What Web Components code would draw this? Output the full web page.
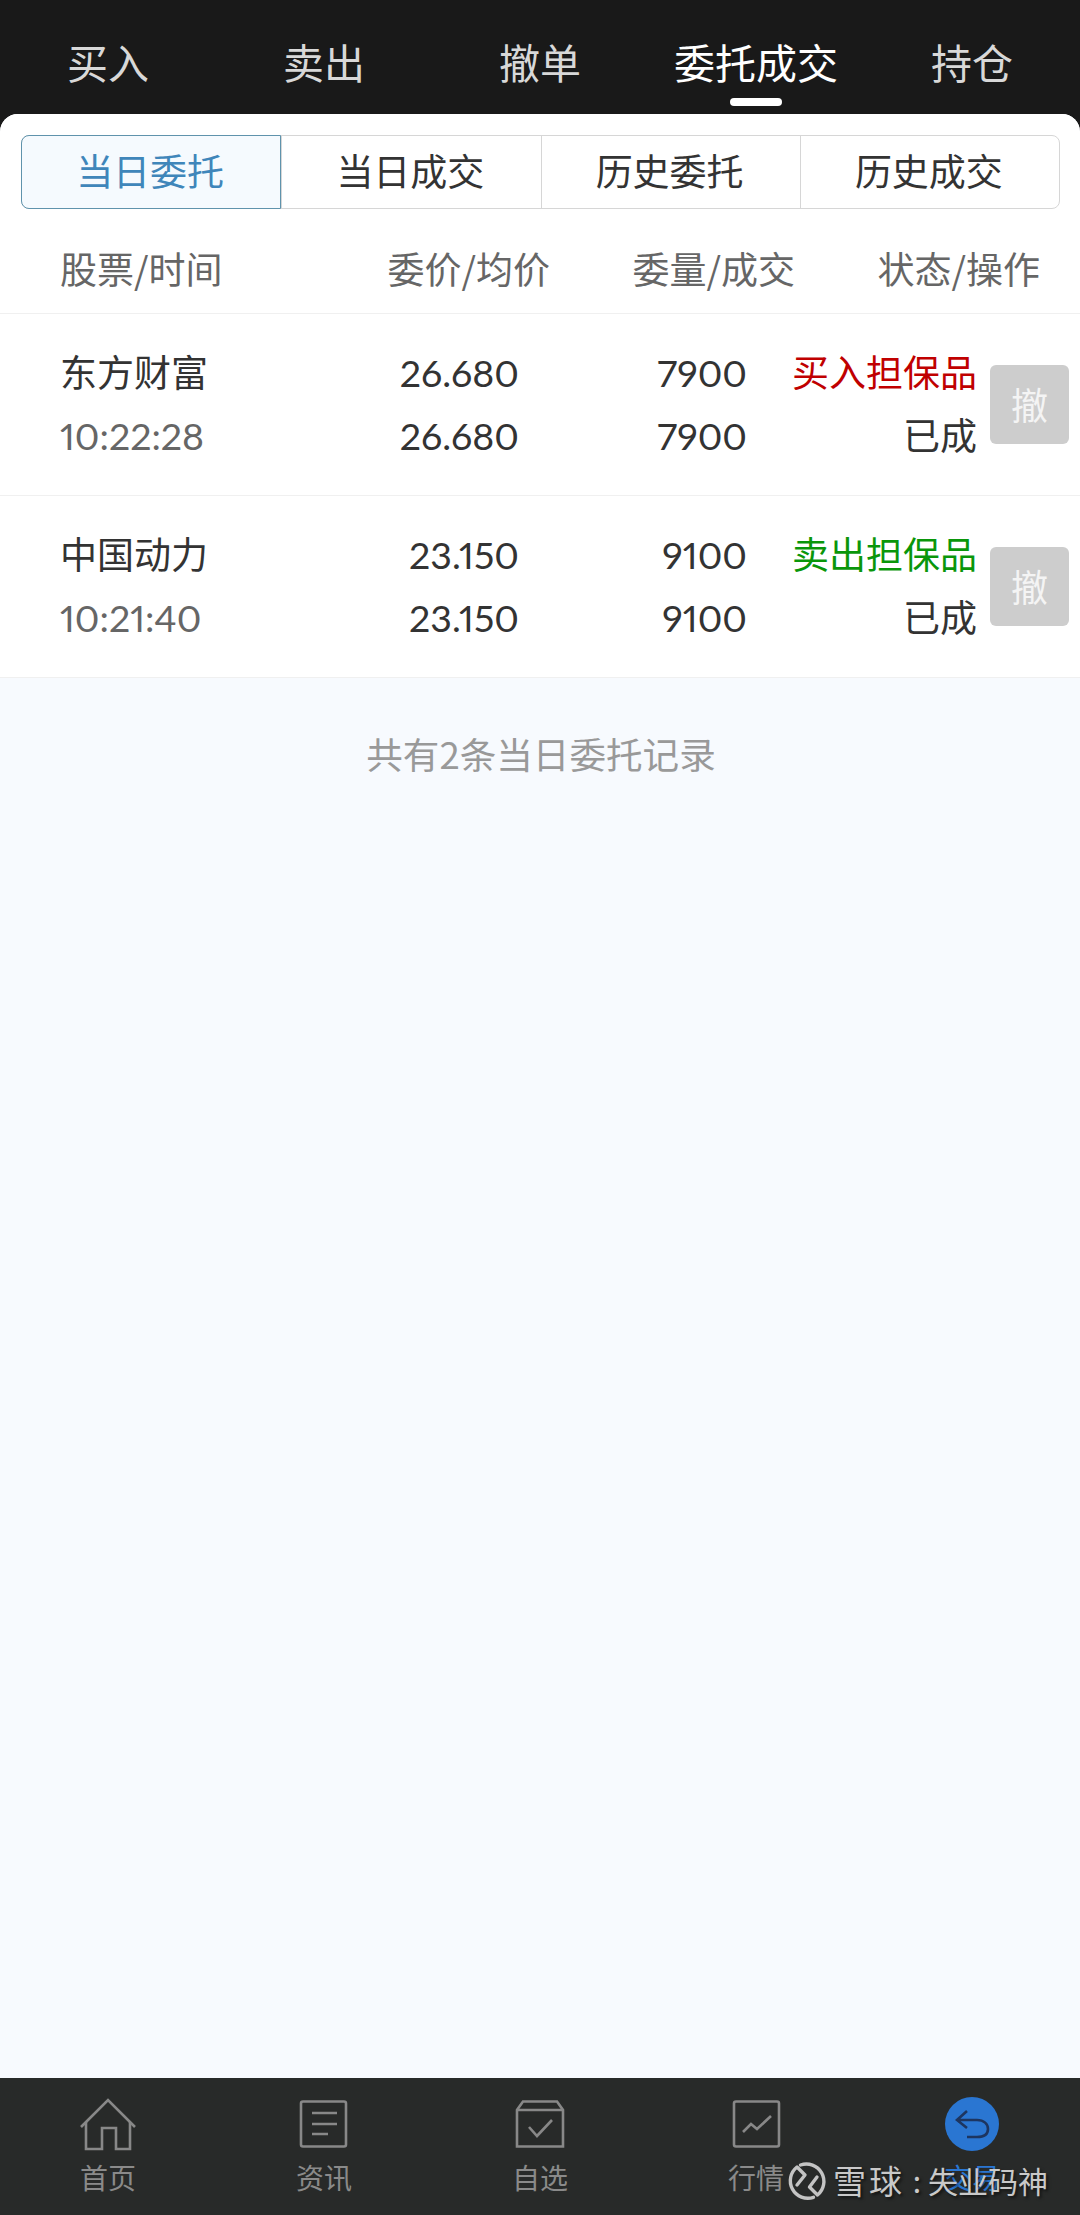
<!DOCTYPE html>
<html lang="zh">
<head>
<meta charset="utf-8">
<title>委托成交</title>
<style>
	html, body { margin: 0; padding: 0; }
	body {
		width: 1080px;
		height: 2215px;
		overflow: hidden;
		background: #191919;
		font-family: "Noto Sans CJK SC", sans-serif;
	}
</style>
</head>
<body>
<trade-page>
	<top-tabs slot="top">
		<top-tab>买入</top-tab>
		<top-tab>卖出</top-tab>
		<top-tab>撤单</top-tab>
		<top-tab active>委托成交</top-tab>
		<top-tab>持仓</top-tab>
	</top-tabs>

	<seg-bar>
		<seg-item active>当日委托</seg-item>
		<seg-item>当日成交</seg-item>
		<seg-item>历史委托</seg-item>
		<seg-item>历史成交</seg-item>
	</seg-bar>

	<order-head></order-head>

	<order-row side="buy">
		<span slot="name">东方财富</span>
		<span slot="time">10:22:28</span>
		<span slot="price">26.680</span>
		<span slot="avg">26.680</span>
		<span slot="qty">7900</span>
		<span slot="done">7900</span>
		<span slot="side">买入担保品</span>
		<span slot="status">已成</span>
	</order-row>
	<order-row side="sell">
		<span slot="name">中国动力</span>
		<span slot="time">10:21:40</span>
		<span slot="price">23.150</span>
		<span slot="avg">23.150</span>
		<span slot="qty">9100</span>
		<span slot="done">9100</span>
		<span slot="side">卖出担保品</span>
		<span slot="status">已成</span>
	</order-row>

	<list-note>共有2条当日委托记录</list-note>

	<bottom-nav slot="bottom">
		<nav-item>
			<svg slot="icon" width="56" height="56" viewBox="0 0 56 56" fill="none" stroke="#888" stroke-width="2.6">
				<path d="M1 29 L28 2 L55 29"/>
				<path d="M6 24 V51 H22 V30 H36 V51 H50 V24"/>
			</svg>
			首页
		</nav-item>
		<nav-item>
			<svg slot="icon" width="56" height="56" viewBox="0 0 56 56" fill="none" stroke="#888" stroke-width="2.6">
				<rect x="5" y="3.5" width="45" height="45" rx="2"/>
				<path d="M16 15 H41 M16 26 H41 M16 36 H32"/>
			</svg>
			资讯
		</nav-item>
		<nav-item>
			<svg slot="icon" width="56" height="56" viewBox="0 0 56 56" fill="none" stroke="#888" stroke-width="2.6">
				<path d="M5 48.5 V12 L11 3.5 H45 L51 12 V48.5 Z"/>
				<path d="M5 12 H51"/>
				<path d="M17 29 L25 38 L40 22"/>
			</svg>
			自选
		</nav-item>
		<nav-item>
			<svg slot="icon" width="56" height="56" viewBox="0 0 56 56" fill="none" stroke="#888" stroke-width="2.6">
				<rect x="6" y="3.5" width="45" height="45" rx="2"/>
				<path d="M15 34 L23 26 L29 31 L43 18"/>
			</svg>
			行情
		</nav-item>
		<nav-item current>
			<svg slot="icon" width="56" height="56" viewBox="0 0 56 56" fill="none">
				<circle cx="28" cy="26" r="27" fill="#2a76d2"/>
				<path d="M23 13 L13 22 L23 30 M13 22 H33 C40 22 44 26 44 31 C44 36 40 39 33 39 H23" stroke="#1d3560" stroke-width="2.6"/>
			</svg>
			交易
		</nav-item>
	</bottom-nav>

	<xq-mark slot="bottom"></xq-mark>
</trade-page>

<script>
const cjk = '"Noto Sans CJK SC", sans-serif';
const latin = 'Lato, "Noto Sans CJK SC", sans-serif';

class TradePage extends HTMLElement {
	constructor() {
		super();
		this.attachShadow({ mode: "open" });
		this.shadowRoot.innerHTML = `
		<style>
			:host { display: flex; flex-direction: column; width: 1080px; height: 2215px; position: relative; }
			.panel {
				flex: 1;
				min-height: 0;
				background: #f7fafe;
				border-radius: 18px 18px 0 0;
				display: flex;
				flex-direction: column;
			}
		</style>
		<slot name="top"></slot>
		<div class="panel"><slot></slot></div>
		<slot name="bottom"></slot>`;
	}
}

class TopTabs extends HTMLElement {
	constructor() {
		super();
		this.attachShadow({ mode: "open" });
		this.shadowRoot.innerHTML = `
		<style>
			:host { display: grid; grid-template-columns: repeat(5, 216px); height: 114px; background: #191919; }
		</style>
		<slot></slot>`;
	}
}

class TopTab extends HTMLElement {
	constructor() {
		super();
		this.attachShadow({ mode: "open" });
		this.shadowRoot.innerHTML = `
		<style>
			:host {
				display: flex;
				flex-direction: column;
				align-items: center;
				padding-top: 36px;
				box-sizing: border-box;
				font: 41px/50px ${cjk};
				color: #d8d8d8;
			}
			:host([active]) { color: #fff; }
			.bar { width: 52px; height: 8px; border-radius: 4px; margin-top: 12px; background: transparent; }
			:host([active]) .bar { background: #fff; }
		</style>
		<slot></slot>
		<div class="bar"></div>`;
	}
}

class SegBar extends HTMLElement {
	constructor() {
		super();
		this.attachShadow({ mode: "open" });
		this.shadowRoot.innerHTML = `
		<style>
			:host {
				display: block;
				background: #fff;
				padding: 21px 20px 0 21px;
				border-radius: 18px 18px 0 0;
			}
			.bar {
				display: grid;
				grid-template-columns: repeat(4, 1fr);
				height: 74px;
				box-sizing: border-box;
				border: 1px solid #d6d6d6;
				border-radius: 8px;
			}
		</style>
		<div class="bar"><slot></slot></div>`;
	}
}

class SegItem extends HTMLElement {
	constructor() {
		super();
		this.attachShadow({ mode: "open" });
		this.shadowRoot.innerHTML = `
		<style>
			:host {
				display: flex;
				align-items: center;
				justify-content: center;
				padding: 0 2px 3px 0;
				box-sizing: border-box;
				font: 37px/1 ${cjk};
				color: #333;
				border-left: 1px solid #d6d6d6;
			}
			:host(:first-child) { border-left: 0; }
			:host([active]) {
				color: #3f86ba;
				background: #f5fafe;
				margin: -1px 0 -1px -1px;
				border: 1px solid #5f93ac;
				border-radius: 8px 0 0 8px;
			}
		</style>
		<slot></slot>`;
	}
}

class OrderHead extends HTMLElement {
	constructor() {
		super();
		this.attachShadow({ mode: "open" });
		this.shadowRoot.innerHTML = `
		<style>
			:host {
				display: grid;
				grid-template-columns: 200px 290px 245px 245px;
				align-items: center;
				height: 105px;
				box-sizing: border-box;
				padding: 15px 0 0 60px;
				background: #fff;
				border-bottom: 1px solid #f0f0f0;
				font: 37px/1 ${cjk};
				color: #666;
			}
			div + div { text-align: right; }
		</style>
		<div>股票/时间</div>
		<div>委价/均价</div>
		<div>委量/成交</div>
		<div>状态/操作</div>`;
	}
}

class OrderRow extends HTMLElement {
	constructor() {
		super();
		this.attachShadow({ mode: "open" });
		this.shadowRoot.innerHTML = `
		<style>
			:host {
				display: grid;
				grid-template-columns: 240px 219px 228px 230px 103px;
				grid-template-rows: 63px 63px;
				align-content: center;
				align-items: center;
				height: 182px;
				box-sizing: border-box;
				padding: 0 0 3px 60px;
				background: #fff;
				border-bottom: 1px solid #f0f0f0;
				font: 37px/1 ${cjk};
				color: #333;
			}
			.num, .time { font-family: ${latin}; font-size: 37.5px; font-variant-numeric: proportional-nums; padding-top: 3px; }
			.num { text-align: right; }
			.right { text-align: right; }
			.time { color: #666; }
			.side { color: #c00000; }
			:host([side="sell"]) .side { color: #0a960a; }
			.cancel {
				grid-column: 5;
				grid-row: 1 / 3;
				justify-self: start;
				margin: 3px 0 0 13px;
				width: 79px;
				height: 79px;
				border-radius: 6px;
				background: #cdcdcd;
				color: #f4f4f4;
				display: flex;
				align-items: center;
				justify-content: center;
			}
		</style>
		<div><slot name="name"></slot></div>
		<div class="num"><slot name="price"></slot></div>
		<div class="num"><slot name="qty"></slot></div>
		<div class="right side"><slot name="side"></slot></div>
		<div class="cancel">撤</div>
		<div class="time"><slot name="time"></slot></div>
		<div class="num"><slot name="avg"></slot></div>
		<div class="num"><slot name="done"></slot></div>
		<div class="right"><slot name="status"></slot></div>`;
	}
}

class ListNote extends HTMLElement {
	constructor() {
		super();
		this.attachShadow({ mode: "open" });
		this.shadowRoot.innerHTML = `
		<style>
			:host {
				display: block;
				padding: 54px 0 0 2px;
				text-align: center;
				font: 36.6px/44px ${cjk};
				color: #999;
			}
		</style>
		<slot></slot>`;
	}
}

class BottomNav extends HTMLElement {
	constructor() {
		super();
		this.attachShadow({ mode: "open" });
		this.shadowRoot.innerHTML = `
		<style>
			:host {
				display: grid;
				grid-template-columns: repeat(5, 216px);
				height: 137px;
				background: #282a29;
			}
		</style>
		<slot></slot>`;
	}
}

class NavItem extends HTMLElement {
	constructor() {
		super();
		this.attachShadow({ mode: "open" });
		this.shadowRoot.innerHTML = `
		<style>
			:host {
				display: flex;
				flex-direction: column;
				align-items: center;
				padding-top: 20px;
				box-sizing: border-box;
				font: 28px/36px ${cjk};
				color: #8a8a8a;
			}
			:host([current]) { color: #2a76d2; }
			::slotted(svg) { overflow: visible; }
			.icon { height: 56px; margin-bottom: 5px; }
		</style>
		<div class="icon"><slot name="icon"></slot></div>
		<slot></slot>`;
	}
}

// watermark sits over the last two nav labels
class XqMark extends HTMLElement {
	constructor() {
		super();
		this.attachShadow({ mode: "open" });
		this.shadowRoot.innerHTML = `
		<style>
			:host {
				position: absolute;
				left: 780px;
				top: 2147px;
				display: flex;
				align-items: center;
				font: 30px/60px ${cjk};
				color: #c9c9c9;
				text-shadow: 2px 2px 3px rgba(0,0,0,.55);
				white-space: nowrap;
			}
			svg { margin: 6px -7px 0 0; }
			.brand { font-size: 33px; letter-spacing: 3px; }
			.sep { width: 24px; text-align: center; }
			.name { margin-left: -1px; }
		</style>
		<svg width="60" height="60" viewBox="0 0 60 60" fill="none" stroke="#c4c4c4" stroke-width="3.4" stroke-linecap="round" stroke-linejoin="round">
			<path d="M33.5 44.3 A17.5 17.5 0 0 1 17 14 L25 22 L17 32"/>
			<path d="M20.5 12 A17.5 17.5 0 0 1 37.5 42 L29.5 34 L37 24"/>
		</svg>
		<span class="brand">雪球</span><span class="sep">:</span><span class="name">失业码神</span>`;
	}
}

customElements.define("trade-page", TradePage);
customElements.define("top-tabs", TopTabs);
customElements.define("top-tab", TopTab);
customElements.define("seg-bar", SegBar);
customElements.define("seg-item", SegItem);
customElements.define("order-head", OrderHead);
customElements.define("order-row", OrderRow);
customElements.define("list-note", ListNote);
customElements.define("bottom-nav", BottomNav);
customElements.define("nav-item", NavItem);
customElements.define("xq-mark", XqMark);
</script>
</body>
</html>
